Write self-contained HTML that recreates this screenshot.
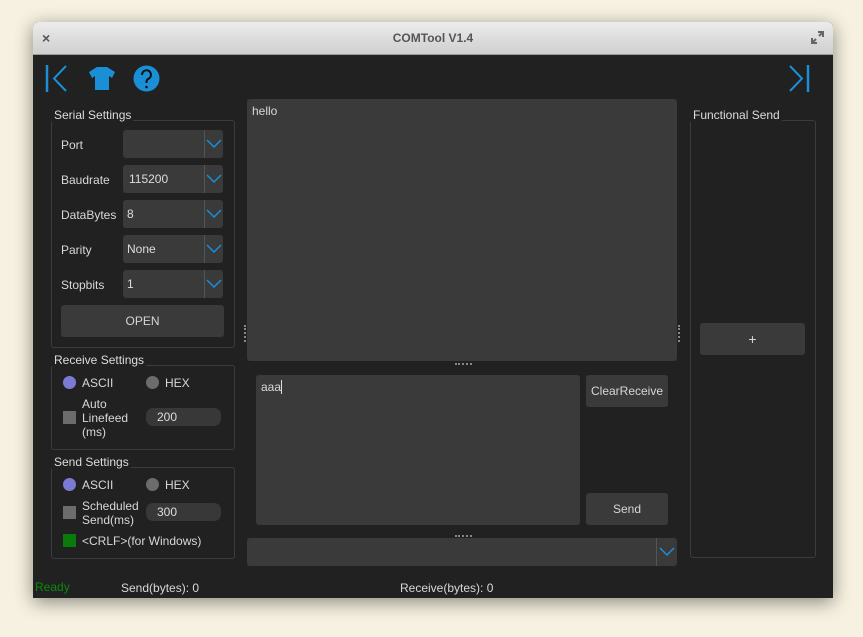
<!DOCTYPE html>
<html><head><style>
body{margin:0;width:863px;height:637px;background:#f6f1e0;font-family:"Liberation Sans",sans-serif;font-size:12px;color:#ddd;position:relative;overflow:hidden}
.a{position:absolute}
#win{left:33px;top:22px;width:800px;height:576px;background:#212121;border-radius:5px 5px 0 0;box-shadow:0 4px 18px rgba(0,0,0,.45);overflow:hidden}
#tb{left:0;top:0;width:800px;height:32px;background:linear-gradient(#ececec,#cfcfcf);border-bottom:1px solid #9a9a9a}
.lbl{color:#d8d8d8;font-size:12px}
.cb{background:#3a3a3a;border-radius:3px;height:28px;width:100px}
.cb span{position:absolute;left:4px;top:7px;color:#ddd}
.cb i{position:absolute;left:81px;top:0;width:1px;height:28px;background:#555}
.cb svg{position:absolute;left:83px;top:9px}
.grp{border:1px solid #3c3c3c;border-radius:3px}
.gt{background:#212121;padding:0 2px;color:#ddd}
.btn{background:#3a3a3a;border-radius:3px;color:#d6d6d6;text-align:center}
.rad{width:13px;height:13px;border-radius:50%}
.sq{width:13px;height:13px}
.inp{background:#383838;border-radius:7px;height:18px;width:75px;color:#ddd}
.inp span{position:absolute;left:11px;top:2px}
</style></head><body>
<div id="win" class="a">
 <div id="tb" class="a">
  <div class="a" style="left:9px;top:8px;color:#555;font-size:14px;font-weight:bold">×</div>
  <div class="a" style="left:0;width:800px;top:9px;text-align:center;font-weight:bold;color:#555;font-size:12px">COMTool V1.4</div>
  <svg class="a" style="left:778px;top:9px" width="13" height="13" viewBox="0 0 13 13"><path d="M7 1h5v5M12 1L8 5M1 7v5h5M1 12l4-4" stroke="#666" stroke-width="2" fill="none"/></svg>
 </div>
</div>
<!-- icons -->
<svg class="a" style="left:45px;top:64px" width="24" height="30"><path d="M2 1v27" stroke="#1a8fd6" stroke-width="2.5"/><path d="M21 2L9 14.5 21 27" stroke="#1a8fd6" stroke-width="2" fill="none"/></svg>
<svg class="a" style="left:88px;top:66px" width="28" height="25" viewBox="0 0 28 25"><path d="M9 1h10l8 5-3 6-3-2v14H7V10l-3 2-3-6z" fill="#1a8fd6"/></svg>
<svg class="a" style="left:133px;top:65px" width="27" height="27"><circle cx="13.5" cy="13.5" r="13" fill="#1a8fd6"/><path d="M9 10a4.5 4.5 0 1 1 6 4c-1.5 1-1.5 2-1.5 4" stroke="#111" stroke-width="2" fill="none"/><circle cx="13.5" cy="22" r="1.3" fill="#111"/></svg>
<svg class="a" style="left:787px;top:64px" width="24" height="30"><path d="M3 2l12 12.5L3 27" stroke="#1a8fd6" stroke-width="2" fill="none"/><path d="M21 1v27" stroke="#1a8fd6" stroke-width="2.5"/></svg>

<!-- serial settings -->
<div class="a grp" style="left:51px;top:120px;width:182px;height:226px"></div>
<div class="a gt" style="left:52px;top:108px">Serial Settings</div>
<div class="a lbl" style="left:61px;top:138px">Port</div>
<div class="a lbl" style="left:61px;top:173px">Baudrate</div>
<div class="a lbl" style="left:61px;top:208px">DataBytes</div>
<div class="a lbl" style="left:61px;top:243px">Parity</div>
<div class="a lbl" style="left:61px;top:278px">Stopbits</div>
<div class="a cb" style="left:123px;top:130px"><i></i><svg width="16" height="10"><path d="M1 1l7 7 7-7" stroke="#1a8fd6" stroke-width="1.5" fill="none"/></svg></div>
<div class="a cb" style="left:123px;top:165px"><span style="left:6px">115200</span><i></i><svg width="16" height="10"><path d="M1 1l7 7 7-7" stroke="#1a8fd6" stroke-width="1.5" fill="none"/></svg></div>
<div class="a cb" style="left:123px;top:200px"><span>8</span><i></i><svg width="16" height="10"><path d="M1 1l7 7 7-7" stroke="#1a8fd6" stroke-width="1.5" fill="none"/></svg></div>
<div class="a cb" style="left:123px;top:235px"><span>None</span><i></i><svg width="16" height="10"><path d="M1 1l7 7 7-7" stroke="#1a8fd6" stroke-width="1.5" fill="none"/></svg></div>
<div class="a cb" style="left:123px;top:270px"><span>1</span><i></i><svg width="16" height="10"><path d="M1 1l7 7 7-7" stroke="#1a8fd6" stroke-width="1.5" fill="none"/></svg></div>
<div class="a btn" style="left:61px;top:305px;width:163px;height:32px;line-height:32px">OPEN</div>

<!-- receive settings -->
<div class="a grp" style="left:51px;top:365px;width:182px;height:83px"></div>
<div class="a gt" style="left:52px;top:353px">Receive Settings</div>
<div class="a rad" style="left:63px;top:376px;background:#7b7bd6"></div>
<div class="a lbl" style="left:82px;top:376px">ASCII</div>
<div class="a rad" style="left:146px;top:376px;background:#6c6c6c"></div>
<div class="a lbl" style="left:165px;top:376px">HEX</div>
<div class="a sq" style="left:63px;top:411px;background:#6c6c6c"></div>
<div class="a lbl" style="left:82px;top:397px;line-height:14px">Auto<br>Linefeed<br>(ms)</div>
<div class="a inp" style="left:146px;top:408px"><span>200</span></div>

<!-- send settings -->
<div class="a grp" style="left:51px;top:467px;width:182px;height:90px"></div>
<div class="a gt" style="left:52px;top:455px">Send Settings</div>
<div class="a rad" style="left:63px;top:478px;background:#7b7bd6"></div>
<div class="a lbl" style="left:82px;top:478px">ASCII</div>
<div class="a rad" style="left:146px;top:478px;background:#6c6c6c"></div>
<div class="a lbl" style="left:165px;top:478px">HEX</div>
<div class="a sq" style="left:63px;top:506px;background:#6c6c6c"></div>
<div class="a lbl" style="left:82px;top:499px;line-height:14px">Scheduled<br>Send(ms)</div>
<div class="a inp" style="left:146px;top:503px"><span>300</span></div>
<div class="a sq" style="left:63px;top:534px;background:#0a7a0a"></div>
<div class="a lbl" style="left:82px;top:534px">&lt;CRLF&gt;(for Windows)</div>

<!-- center -->
<div class="a" style="left:247px;top:99px;width:430px;height:262px;background:#3a3a3a;border-radius:3px"></div>
<div class="a lbl" style="left:252px;top:104px">hello</div>
<div class="a" style="left:455px;top:363px;width:17px;height:2px;border-top:2px dotted #888"></div>
<div class="a" style="left:244px;top:325px;width:2px;height:17px;border-left:2px dotted #888"></div>
<div class="a" style="left:678px;top:325px;width:2px;height:17px;border-left:2px dotted #888"></div>
<div class="a" style="left:256px;top:375px;width:324px;height:150px;background:#3a3a3a;border-radius:3px"></div>
<div class="a lbl" style="left:261px;top:380px">aaa<span style="display:inline-block;width:1px;height:14px;background:#ddd;vertical-align:-3px"></span></div>
<div class="a btn" style="left:586px;top:375px;width:82px;height:32px;line-height:32px">ClearReceive</div>
<div class="a btn" style="left:586px;top:493px;width:82px;height:32px;line-height:32px">Send</div>
<div class="a" style="left:455px;top:535px;width:17px;height:2px;border-top:2px dotted #888"></div>
<div class="a" style="left:247px;top:538px;width:430px;height:28px;background:#3a3a3a;border-radius:3px"><i class="a" style="left:409px;top:0;width:1px;height:28px;background:#555"></i><svg class="a" style="left:412px;top:9px" width="16" height="10"><path d="M1 1l7 7 7-7" stroke="#1a8fd6" stroke-width="1.5" fill="none"/></svg></div>

<!-- functional send -->
<div class="a grp" style="left:690px;top:120px;width:124px;height:436px"></div>
<div class="a gt" style="left:691px;top:108px">Functional Send</div>
<div class="a btn" style="left:700px;top:323px;width:105px;height:32px;line-height:32px;font-size:14px">+</div>

<!-- status -->
<div class="a" style="left:35px;top:580px;color:#0a8a0a">Ready</div>
<div class="a lbl" style="left:121px;top:581px">Send(bytes): 0</div>
<div class="a lbl" style="left:400px;top:581px">Receive(bytes): 0</div>
</body></html>
